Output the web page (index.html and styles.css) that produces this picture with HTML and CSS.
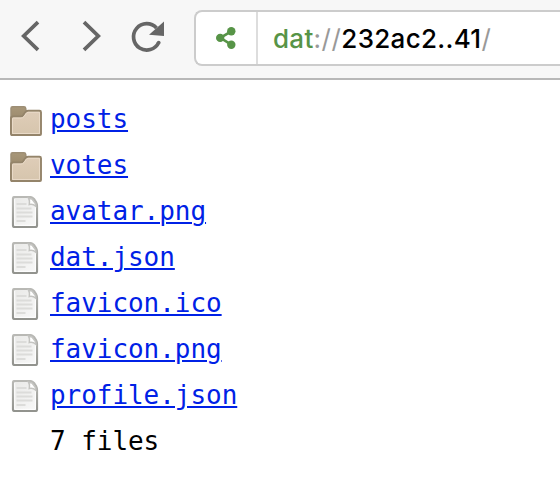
FILE: index.html
```html
<!DOCTYPE html>
<html lang="en">
<head>
<meta charset="utf-8">
<title>Files</title>
<link rel="stylesheet" href="styles.css">
</head>
<body>
<svg class="defs" width="0" height="0" aria-hidden="true">
  <defs>
    <linearGradient id="tab" x2="0" y2="1"><stop offset="0" stop-color="#a89779"/><stop offset="1" stop-color="#8c7a5e"/></linearGradient>
    <linearGradient id="front" x2="0" y2="1"><stop offset="0" stop-color="#dfcdb8"/><stop offset="1" stop-color="#d6c5ad"/></linearGradient>
    <linearGradient id="edge" x2="0" y2="1"><stop offset="0" stop-color="#b9b9b5"/><stop offset="1" stop-color="#92938e"/></linearGradient>
    <linearGradient id="paper" x2="1" y2="1"><stop offset="0" stop-color="#e9e9e7"/><stop offset="1" stop-color="#f8f8f8"/></linearGradient>
  </defs>
  <symbol id="folder" viewBox="0 0 32 32">
    <path d="M1 30V4.300q0-1.500 1.500-1.500H14q1.500 0 1.700 1.500L16 7H29.500v9H1z" fill="url(#tab)" stroke="#9d8e75" stroke-width="1.500"/>
    <path d="M1 30V14.500q0-2 2-2h7.500q1.500 0 2.500-1.200l2.200-3q1.200-1.500 2.800-1.500H29.500q1.500 0 1.500 1.500V30q0 1-1 1H2q-1 0-1-1z" fill="url(#front)" stroke="#94846a" stroke-width="1.900"/>
    <path d="M2.500 29.500V15q0-1 1-1H11q2 0 3-1.500l2.200-3q.8-1.200 2-1.200H29.500V29.500z" fill="none" stroke="#e9dac8" stroke-width="1"/>
  </symbol>
  <symbol id="file" viewBox="0 0 32 32">
    <path d="M3 2.500Q3 1 4.500 1H20q2 0 4 2l2 3q1 2 1 4V29.500q0 1.500-1.500 1.500h-21Q3 31 3 29.500z" fill="url(#paper)" stroke="url(#edge)" stroke-width="2.200"/>
    <path d="M4.700 3V29.300h20.700V11" fill="none" stroke="#fff" stroke-width="1"/>
    <path d="M6.500 8h10M6.500 12.500h15M6.500 16.500h16M6.500 20.500h16M6.500 25h9" stroke="#dcdcda" stroke-width="2"/>
    <path d="M18.500 2.200q1.700 3 .8 6.300 4-.8 6.500 1.800V8L22 3z" fill="#fff" stroke="#c4c4c1" stroke-width="1.500"/>
  </symbol>
</svg>
<header class="toolbar">
  <nav class="controls">
    <svg width="194" height="78" viewBox="0 0 194 78" fill="none" stroke="#666" stroke-width="3.700">
      <path d="M38 22.200 23.700 36 38 49.800M84 22.200 98.300 36 84 49.800"/>
      <path d="M156.500 28A13.200 13.200 0 1 0 158.700 42.500" stroke-width="3.700"/>
      <circle cx="158.700" cy="42.500" r="1.850" fill="#666" stroke="none"/>
      <path d="M164 21.500V36L149 34.700z" fill="#666" stroke="none"/>
    </svg>
  </nav>
  <div class="address">
    <div class="share">
      <svg width="20" height="22" viewBox="0 0 20 22" fill="#579447">
        <path d="M15.300 4.300 4.300 10.800 15.300 17.700" fill="none" stroke="#579447" stroke-width="2.600"/>
        <circle cx="15.300" cy="4.300" r="4.200"/><circle cx="4.200" cy="10.900" r="4.200"/><circle cx="15.300" cy="17.700" r="4.200"/>
      </svg>
    </div>
    <div class="url"><span class="scheme">dat</span><span class="muted">://</span><span class="host">232ac2..41</span><span class="muted">/</span></div>
  </div>
</header>
<main class="listing">
  <div class="row"><svg class="icon"><use href="#folder"/></svg><a href="#">posts</a></div>
  <div class="row"><svg class="icon"><use href="#folder"/></svg><a href="#">votes</a></div>
  <div class="row"><svg class="icon"><use href="#file"/></svg><a href="#">avatar.png</a></div>
  <div class="row"><svg class="icon"><use href="#file"/></svg><a href="#">dat.json</a></div>
  <div class="row"><svg class="icon"><use href="#file"/></svg><a href="#">favicon.ico</a></div>
  <div class="row"><svg class="icon"><use href="#file"/></svg><a href="#">favicon.png</a></div>
  <div class="row"><svg class="icon"><use href="#file"/></svg><a href="#">profile.json</a></div>
  <div class="row summary">7 files</div>
</main>
</body>
</html>
```
FILE: styles.css
```css
* { box-sizing: border-box; }
body { margin: 0; background: #fff; overflow: hidden; }
.defs { display: block; }
.toolbar { display: flex; height: 80px; background: #f7f7f7; border-bottom: 2px solid #b8b8b8; }
.controls { width: 194px; flex: none; }
.controls svg { display: block; }
.address { display: flex; flex: 1; height: 56px; margin-top: 10px; background: #fff; border: 2px solid #ccc; border-right: 0; border-radius: 8px 0 0 8px; }
.share { display: flex; align-items: center; width: 62px; padding-left: 20px; border-right: 2px solid #ddd; }
.url { padding-left: 15px; font: 26px/54px Inter, sans-serif; white-space: nowrap; letter-spacing: 0.5px; }
.scheme { color: #579447; font-weight: 500; letter-spacing: 0.3px; }
.muted { color: #999; }
.host { color: #000; font-weight: 500; letter-spacing: 0.3px; }
.listing { padding: 16px 10px 0; font: 26px/46px "DejaVu Sans Mono", monospace; letter-spacing: -0.05px; }
.row { display: flex; align-items: center; height: 46px; }
.icon { width: 32px; height: 32px; margin: 2px 8px 0 0; flex: none; }
.row a { color: #0021e6; text-decoration-thickness: 2px; text-underline-offset: 2px; }
.summary { padding-left: 40px; }
```
